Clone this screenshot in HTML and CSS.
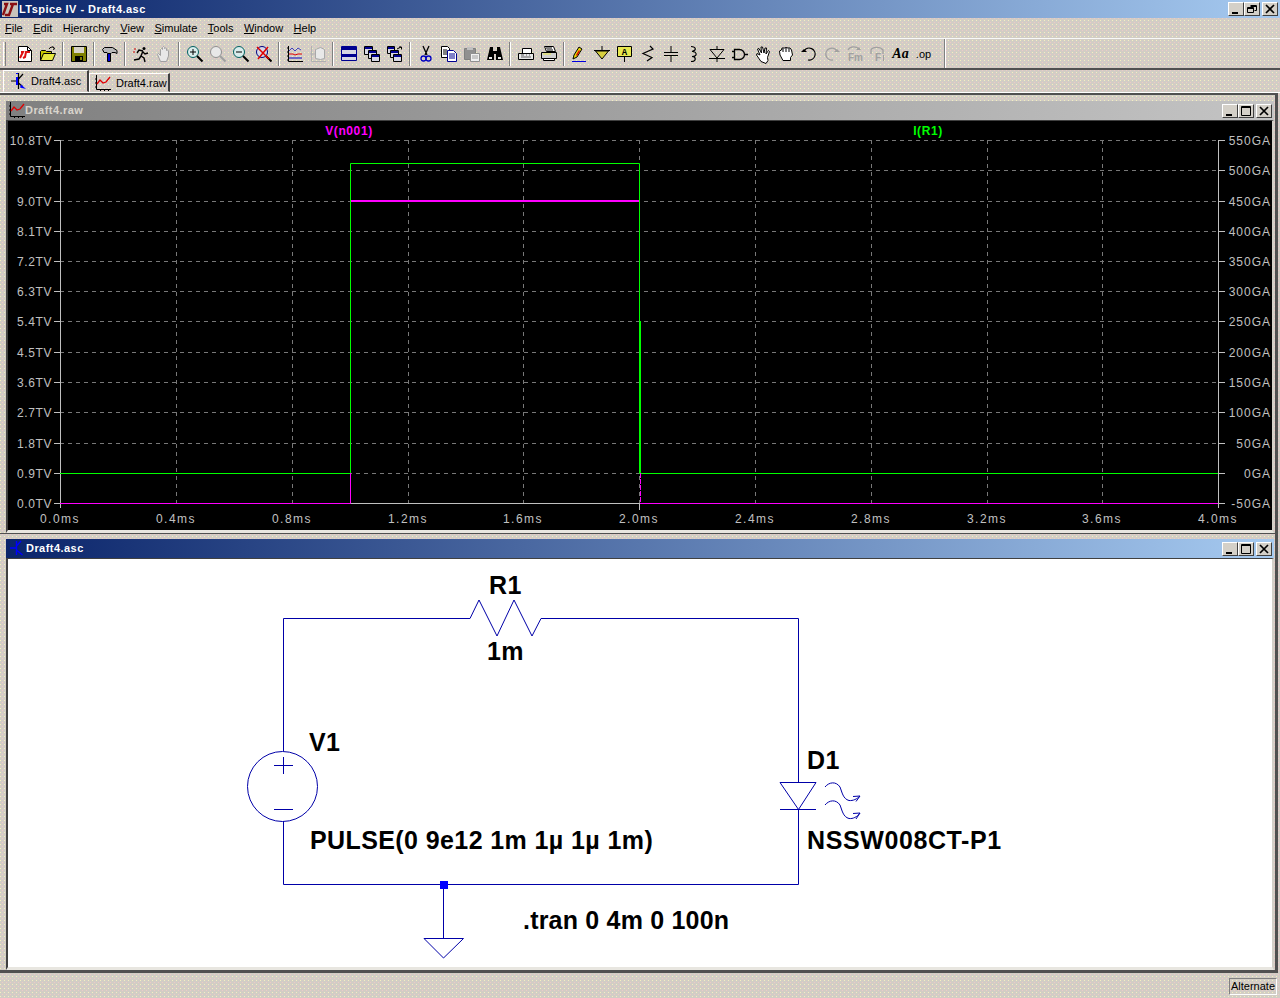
FILE: index.html
```html
<!DOCTYPE html>
<html lang="en">
<head>
<meta charset="utf-8">
<title>LTspice IV - Draft4.asc</title>
<link rel="stylesheet" href="styles.css">
</head>
<body>
<div class="app">
  <header class="titlebar active">
    <svg class="logo" viewBox="0 0 16 16"><rect width="16" height="16" fill="#c8c4bc"/><path d="M1 14 5 3H2M3 14h5M8 3h7M11 3 7 14" fill="none" stroke="#8a0f12" stroke-width="2.4"/></svg>
    <span class="title-text">LTspice IV - Draft4.asc</span>
    <span class="winbtns main">
      <span class="wbtn"><svg viewBox="0 0 12 10"><path d="M2 8h6v2H2z"/></svg></span>
      <span class="wbtn"><svg viewBox="0 0 12 10"><path d="M4.500 1.500h6v5h-2M4.500 2.500h6M1.500 3.500h6v5h-6zM1.500 4.500h6" fill="none" stroke="#000"/></svg></span>
      <span class="wbtn gap"><svg viewBox="0 0 12 10"><path d="M2 1l8 8M10 1 2 9" fill="none" stroke="#000" stroke-width="1.700"/></svg></span>
    </span>
  </header>

  <nav class="menubar">
    <span class="menu"><u>F</u>ile</span>
    <span class="menu"><u>E</u>dit</span>
    <span class="menu">H<u>i</u>erarchy</span>
    <span class="menu"><u>V</u>iew</span>
    <span class="menu"><u>S</u>imulate</span>
    <span class="menu"><u>T</u>ools</span>
    <span class="menu"><u>W</u>indow</span>
    <span class="menu"><u>H</u>elp</span>
  </nav>

  <div class="toolbar">
    <span class="grip"></span>
    <span class="tool"><svg viewBox="0 0 16 16"><path d="M1.500.500h9l4 4v11h-13z" fill="#fff" stroke="#000"/><path d="M10.500.500v4h4" fill="none" stroke="#000"/><path d="M3 12 6 6H4M6 12l2-1 1-5h4" fill="none" stroke="#e01010" stroke-width="2"/></svg></span>
    <span class="tool"><svg viewBox="0 0 16 16"><path d="M.500 14.500v-9l1-1h4l1 1h5v2" fill="#c8c800" stroke="#000"/><path d="M.500 14.500l3-7h12l-3 7z" fill="#e8e840" stroke="#000"/><path d="M9 3c1-2 3-2.500 5-1M12.500.500l2 1.500-1 2" fill="none" stroke="#000"/></svg></span>
    <span class="sep"></span>
    <span class="tool"><svg viewBox="0 0 16 16"><path d="M.500.500h15v15h-15z" fill="#808000" stroke="#000"/><path d="M3 1h10v6H3z" fill="#d8d4c8"/><path d="M4 10h8v5H4z" fill="#000"/><path d="M9 11h2v3H9z" fill="#808000"/></svg></span>
    <span class="sep"></span>
    <span class="tool"><svg viewBox="0 0 16 16"><path d="M.500 3.500l2-2h8l4.500 3v3l-2-1h-3l-1 1h-3l-1-1h-3z" fill="#b8b8b8" stroke="#000"/><path d="M5.500 7.500h3v8h-3z" fill="#0000d0" stroke="#000"/></svg></span>
    <span class="sep"></span>
    <span class="tool"><svg viewBox="0 0 16 16"><circle cx="11" cy="2.500" r="1.500"/><path d="M10 5 6 4 4 7M10 5 8 10l3 2 1 4M8 10l-2 3-5 1M10 6l2 2 3-1" fill="none" stroke="#000" stroke-width="1.400"/><path d="M1 3h2M0 6h2" stroke="#d00000"/></svg></span>
    <span class="tool off"><svg viewBox="0 0 16 16"><path d="M4.500 15.500 1.500 8.500l1-1 2 2v-6l1-1 1 1v-2l1-1 1 1v1l1-.5 1 .5v2l1-.5 1 1v5l-2 5.500z" fill="#e8e8e8" stroke="#a0a0a0"/></svg></span>
    <span class="sep"></span>
    <span class="tool"><svg viewBox="0 0 16 16"><circle cx="6" cy="6" r="5.500" fill="#d8ecec" stroke="#006060"/><path d="M3 6h6M6 3v6" stroke="#000" fill="none"/><path d="M10 10l5.500 5.500" stroke="#000" stroke-width="2"/></svg></span>
    <span class="tool off"><svg viewBox="0 0 16 16"><circle cx="6" cy="6" r="5.500" fill="#e8e8e8" stroke="#909090"/><path d="M10 10l5.500 5.500" stroke="#a0a0a0" stroke-width="2"/></svg></span>
    <span class="tool"><svg viewBox="0 0 16 16"><circle cx="6" cy="6" r="5.500" fill="#d8ecec" stroke="#006060"/><path d="M3 6h6" stroke="#000"/><path d="M10 10l5.500 5.500" stroke="#000" stroke-width="2"/></svg></span>
    <span class="tool"><svg viewBox="0 0 16 16"><circle cx="6" cy="6" r="5.500" fill="#d8d8e8" stroke="#000080"/><path d="M10 10l5.500 5.500" stroke="#000" stroke-width="2"/><path d="M1 1l12 12M12 1 2 13" stroke="#e00000" stroke-width="1.500"/></svg></span>
    <span class="sep"></span>
    <span class="tool"><svg viewBox="0 0 16 16"><path d="M1.500 0v15.500H16M0 14h1M0 10h1M0 6h1M0 2h1M5.500 16v-1M9.500 16v-1M13.500 16v-1" fill="none" stroke="#000"/><path d="M2 5l3-3 3 3 3-3 3 2" fill="none" stroke="#4040c0"/><path d="M2 8h4l2 1 3-1h4" fill="none" stroke="#e00000"/><path d="M2 12h13" stroke="#0000c0"/></svg></span>
    <span class="tool off"><svg viewBox="0 0 16 16"><path d="M1.500 0v15.500H16M0 8h15" fill="none" stroke="#b0b0b0"/><path d="M5.500 3.500l5-2 4 2v9l-4 1-5-1z" fill="#e8e8e8" stroke="#a8a8a8"/></svg></span>
    <span class="sep"></span>
    <span class="tool"><svg viewBox="0 0 16 16"><path d="M.500.500h15v14h-15z" fill="#d8d8e4" stroke="#000090"/><path d="M1 1h14v3H1zM1 8h14v3H1z" fill="#000090"/></svg></span>
    <span class="tool"><svg viewBox="0 0 16 16"><path d="M.500.500h8v8h-8z" fill="#d8d8e4" stroke="#000"/><path d="M1 1h7v2H1z" fill="#000090"/><path d="M4.500 4.500h8v8h-8z" fill="#d8d8e4" stroke="#000"/><path d="M5 5h7v2H5z" fill="#000090"/><path d="M7.500 8.500h8v7h-8z" fill="#d8d8e4" stroke="#000"/><path d="M8 9h7v2H8z" fill="#000090"/></svg></span>
    <span class="tool"><svg viewBox="0 0 16 16"><path d="M.500.500h7v7h-7z" fill="#d8d8e4" stroke="#000"/><path d="M1 1h6v2H1z" fill="#000090"/><path d="M3.500 4.500h8v7h-8z" fill="#d8d8e4" stroke="#000"/><path d="M4 5h7v2H4z" fill="#000090"/><path d="M6.500 8.500h8v7h-8z" fill="#d8d8e4" stroke="#000"/><path d="M7 9h7v2H7z" fill="#000090"/><path d="M10 3l4-2M12 1h2.500v2.500" fill="none" stroke="#000"/></svg></span>
    <span class="sep"></span>
    <span class="tool"><svg viewBox="0 0 16 16"><path d="M5 0l4 9M11 0 7 9" stroke="#000" stroke-width="1.300" fill="none"/><circle cx="5.500" cy="12.500" r="2.500" fill="none" stroke="#0000c0" stroke-width="1.300"/><circle cx="10.500" cy="12.500" r="2.500" fill="none" stroke="#0000c0" stroke-width="1.300"/></svg></span>
    <span class="tool"><svg viewBox="0 0 16 16"><path d="M.500.500h6l2 2v9h-8z" fill="#fff" stroke="#000"/><path d="M2 4h4M2 6h4M2 8h4" stroke="#000"/><path d="M6.500 4.500h6l3 3v8h-9z" fill="#fff" stroke="#000090"/><path d="M8 8h6M8 10h6M8 12h6" stroke="#000090"/></svg></span>
    <span class="tool off"><svg viewBox="0 0 16 16"><path d="M.500 2.500h11v11h-11z" fill="#909090" stroke="#808080"/><path d="M3 1h6v3H3z" fill="#c0c0c0"/><path d="M6.500 7.500h9v8h-9z" fill="#f0f0f0" stroke="#909090"/><path d="M8 10h6M8 12h6" stroke="#a0a0a0"/></svg></span>
    <span class="tool"><svg viewBox="0 0 16 16"><path d="M3 1h3v4h4V1h3l3 13H9V8H7v6H0z" fill="#000"/><path d="M2 11h3v2H2zM11 11h3v2h-3z" fill="#e8e8e8"/></svg></span>
    <span class="sep"></span>
    <span class="tool"><svg viewBox="0 0 16 16"><path d="M4.500 2.500h9v5h-9z" fill="#fff" stroke="#000"/><path d="M.500 7.500h15v6h-15z" fill="#e8e8e8" stroke="#000"/><path d="M3 9h3M8 9h1M11 9h1M3 11h10" stroke="#606060"/></svg></span>
    <span class="tool"><svg viewBox="0 0 16 16"><path d="M3.500.500h9l2 5h-9z" fill="#fff" stroke="#000"/><path d="M5 2h6M6 4h6" stroke="#000"/><path d="M.500 6.500h15v6h-15z" fill="#d0d0d0" stroke="#000"/><path d="M2 8h8" stroke="#e8e840"/><path d="M2.500 12.500h11v2h-11z" fill="#fff" stroke="#000"/></svg></span>
    <span class="sep last"></span>
    <span class="tool"><svg viewBox="0 0 16 16"><path d="M1 15.500h14" stroke="#0000e0"/><path d="M2 13l1-4 5-8 3 2-5 8z" fill="#e8d800" stroke="#000"/><path d="M5 9l3-5 1 1-3 5z" fill="#e00000"/></svg></span>
    <span class="tool"><svg viewBox="0 0 16 16"><path d="M8 0v4M0 4.500h16" stroke="#000" fill="none"/><path d="M1.500 5l6.500 8 6.500-8z" fill="#d8d040" stroke="#000"/></svg></span>
    <span class="tool"><svg viewBox="0 0 16 16"><path d="M.500.500h14v10h-14z" fill="#e8e850" stroke="#000"/><path d="M7.500 10v6" stroke="#000"/><text class="ico-a" x="7.500" y="9" text-anchor="middle">A</text></svg></span>
    <span class="tool"><svg viewBox="0 0 16 16"><path d="M10 0 13 3 3 7.500 12 11.500 7 15" fill="none" stroke="#000" stroke-width="1.200"/></svg></span>
    <span class="tool"><svg viewBox="0 0 16 16"><path d="M8 0v6M8 10v6M1 6.500h14M1 9.500h14" fill="none" stroke="#000"/></svg></span>
    <span class="tool"><svg viewBox="0 0 16 16"><path d="M5 .500c5 0 6 4 1 5 5 0 6 5 0 5 4 0 5 5-1 5" fill="none" stroke="#000" stroke-width="1.200"/></svg></span>
    <span class="tool"><svg viewBox="0 0 16 16"><path d="M8 0v3M8 12v4M0 12.500h16M1 3.500h14L8 12z" fill="none" stroke="#000"/></svg></span>
    <span class="tool"><svg viewBox="0 0 16 16"><path d="M2.500 3.500h5a5 5 0 0 1 0 10h-5zM0 5.500h2.500M0 11.500h2.500M12.500 8.500H16" fill="none" stroke="#000" stroke-width="1.300"/></svg></span>
    <span class="tool"><svg viewBox="0 0 16 16"><path d="M6 15.500 1.500 9 2 7.500 5 9 2.500 3 4 2.500 6.500 7l-.5-6h1.500l1.500 6 1-5h1.500l-.5 6 2.500-3.500 1 1-2 6 .5 3-2 3z" fill="#fff" stroke="#000"/></svg></span>
    <span class="tool"><svg viewBox="0 0 16 16"><path d="M5 14.500 2 9 1.500 5l2-1 .5-2h2.500L8 1.500l2 .5h2l1.500 2 1 5-2 2.500v3z" fill="#fff" stroke="#000"/><path d="M5 2.500V6M8 2v4M11 2.500V6" stroke="#000"/></svg></span>
    <span class="tool"><svg viewBox="0 0 16 16"><path d="M3 5a6 6 0 1 1 4 9" fill="none" stroke="#000" stroke-width="1.200"/><path d="M0 6h6L3 3z" fill="#000"/></svg></span>
    <span class="tool off"><svg viewBox="0 0 16 16"><path d="M13 5a6 6 0 1 0-4 9" fill="none" stroke="#a0a0a0" stroke-width="1.400"/><path d="M16 6h-6l3-3z" fill="#a0a0a0"/></svg></span>
    <span class="tool off"><svg viewBox="0 0 16 16"><path d="M1 4C3 0 9 0 12 3" fill="none" stroke="#a0a0a0" stroke-width="1.300"/><path d="M14 4h-5l3-3z" fill="#a0a0a0"/><text class="ico-fm" x="1" y="15">Fm</text></svg></span>
    <span class="tool off"><svg viewBox="0 0 16 16"><path d="M1 8V4C2 1 10 0 13 4v4" fill="none" stroke="#a0a0a0" stroke-width="1.300"/><text class="ico-fm" x="5" y="15">F</text><path d="M13.500 9v6" stroke="#a0a0a0"/></svg></span>
    <span class="tool"><span class="ico-aa">Aa</span></span>
    <span class="tool"><span class="ico-op">.op</span></span>
    <span class="tool-end"></span>
  </div>

  <div class="tabs">
    <span class="tab current">
      <svg class="mini" viewBox="0 0 16 16"><path d="M7.500 0v16M0 8h7M7.500 6 12 1M7.500 10l4 3.500" fill="none" stroke="#000" stroke-width="1.200"/><path d="M10 11.500 15 16l-6-1.500z" fill="#0000ff"/><path d="M5 0h2M6 4v8" stroke="#0000ff" stroke-width="2"/></svg>
      Draft4.asc
    </span>
    <span class="tab">
      <svg class="mini" viewBox="0 0 16 16"><path d="M1.500 0v14.500H16M0 4h1M0 8h1M0 12h1M5.500 16v-1M9.500 16v-1M13.500 16v-1" fill="none" stroke="#000"/><path d="M2 9l3-4 3 3 3-1 4-5" fill="none" stroke="#e00000" stroke-width="1.300"/></svg>
      Draft4.raw
    </span>
  </div>

  <main class="mdi">
    <section class="child first">
      <div class="titlebar sub idle">
        <svg class="mini plotico" viewBox="0 0 16 16"><path d="M1.500 0v14.500H16M0 4h1M0 8h1M0 12h1M5.500 16v-1M9.500 16v-1M13.500 16v-1" fill="none" stroke="#000"/><path d="M2 9l3-4 3 3 3-1 4-5" fill="none" stroke="#e00000" stroke-width="1.300"/></svg>
        <span class="title-text">Draft4.raw</span>
        <span class="winbtns">
          <span class="wbtn"><svg viewBox="0 0 12 10"><path d="M2 8h6v2H2z"/></svg></span>
          <span class="wbtn"><svg viewBox="0 0 12 10"><path d="M1.500 .5h9v9h-9zM1.500 1.500h9" fill="none" stroke="#000"/></svg></span>
          <span class="wbtn gap"><svg viewBox="0 0 12 10"><path d="M2 1l8 8M10 1 2 9" fill="none" stroke="#000" stroke-width="1.700"/></svg></span>
        </span>
      </div>
      <div class="pane plotpane">
        <svg class="plot" viewBox="8 121 1264 409" width="1264" height="409">
          <path class="grid" d="M176.500 140V503M292.500 140V503M408.500 140V503M523.500 140V503M639.500 140V503M755.500 140V503M871.500 140V503M987.500 140V503M1102.500 140V503M60 140.500H1218M60 170.500H1218M60 201.500H1218M60 231.500H1218M60 261.500H1218M60 291.500H1218M60 321.500H1218M60 352.500H1218M60 382.500H1218M60 412.500H1218M60 443.500H1218M60 473.500H1218"/>
          <path class="axis" d="M60.500 140V508M1218.500 140V508M60 503.500H1218M639.500 503V510M54 140.500h6M54 170.500h6M54 201.500h6M54 231.500h6M54 261.500h6M54 291.500h6M54 321.500h6M54 352.500h6M54 382.500h6M54 412.500h6M54 443.500h6M54 473.500h6M54 503.500h6M1218 140.500h7M1218 170.500h7M1218 201.500h7M1218 231.500h7M1218 261.500h7M1218 291.500h7M1218 321.500h7M1218 352.500h7M1218 382.500h7M1218 412.500h7M1218 443.500h7M1218 473.500h7M1218 503.500h7"/>
          <path class="green" d="M60 473.500H350.500V163.500H639.500V473.500H1218"/>
          <path class="green" d="M640.500 321V473"/>
          <path class="magenta" d="M60 503.500H350.500V473"/>
          <path class="magenta thick" d="M351 201H639"/>
          <path class="magenta dash" d="M640.500 473V503"/>
          <path class="magenta" d="M640 503.500H1218"/>
          <g class="lab end">
            <text x="52" y="145">10.8TV</text><text x="52" y="175">9.9TV</text><text x="52" y="206">9.0TV</text><text x="52" y="236">8.1TV</text><text x="52" y="266">7.2TV</text><text x="52" y="296">6.3TV</text><text x="52" y="326">5.4TV</text><text x="52" y="357">4.5TV</text><text x="52" y="387">3.6TV</text><text x="52" y="417">2.7TV</text><text x="52" y="448">1.8TV</text><text x="52" y="478">0.9TV</text><text x="52" y="508">0.0TV</text>
          </g>
          <g class="lab end right">
            <text x="1271" y="145">550GA</text><text x="1271" y="175">500GA</text><text x="1271" y="206">450GA</text><text x="1271" y="236">400GA</text><text x="1271" y="266">350GA</text><text x="1271" y="296">300GA</text><text x="1271" y="326">250GA</text><text x="1271" y="357">200GA</text><text x="1271" y="387">150GA</text><text x="1271" y="417">100GA</text><text x="1271" y="448">50GA</text><text x="1271" y="478">0GA</text><text x="1271" y="508">-50GA</text>
          </g>
          <g class="lab mid">
            <text x="60" y="523">0.0ms</text><text x="176" y="523">0.4ms</text><text x="292" y="523">0.8ms</text><text x="408" y="523">1.2ms</text><text x="523" y="523">1.6ms</text><text x="639" y="523">2.0ms</text><text x="755" y="523">2.4ms</text><text x="871" y="523">2.8ms</text><text x="987" y="523">3.2ms</text><text x="1102" y="523">3.6ms</text><text x="1218" y="523">4.0ms</text>
          </g>
          <text class="lab trace-m" x="349" y="135">V(n001)</text>
          <text class="lab trace-g" x="928" y="135">I(R1)</text>
        </svg>
      </div>
    </section>

    <section class="child second">
      <div class="titlebar sub active">
        <svg class="mini plotico" viewBox="0 0 16 16"><path d="M7.500 1v14M1 8h6M7.500 6 12 1M7.500 10l6 5" fill="none" stroke="#0000ff" stroke-width="1.400"/></svg>
        <span class="title-text">Draft4.asc</span>
        <span class="winbtns">
          <span class="wbtn"><svg viewBox="0 0 12 10"><path d="M2 8h6v2H2z"/></svg></span>
          <span class="wbtn"><svg viewBox="0 0 12 10"><path d="M1.500 .5h9v9h-9zM1.500 1.500h9" fill="none" stroke="#000"/></svg></span>
          <span class="wbtn gap"><svg viewBox="0 0 12 10"><path d="M2 1l8 8M10 1 2 9" fill="none" stroke="#000" stroke-width="1.700"/></svg></span>
        </span>
      </div>
      <div class="pane schpane">
        <svg class="sch" viewBox="8 559 1264 408" width="1264" height="408">
          <path class="wire" d="M283.500 751V618.500H470L479 600 497 636 514 600 532 636 541 618.500H798.500V782M798.500 809V884.500H283.500V821"/>
          <circle class="wire" cx="282.500" cy="786.500" r="35"/>
          <path class="wire" d="M274 765.500H293M283.500 757V774M274 809.500H293"/>
          <path class="wire" d="M780 782.500H816L798.500 809.500ZM780 809.500H816"/>
          <path class="wire" d="M825 787C829 782 836 781 840 787 842 792 843 799 849 800.500 853 801 857 799 860 796M853 796.500 860 796 856 801.500"/>
          <path class="wire" d="M825 805C829 800 836 799 840 805 842 810 843 817 849 818.500 853 819 857 817 860 813M853 813.500 860 813 856 819"/>
          <path class="wire" d="M443.500 884V938.500M424 938.500H463.500L443.500 958Z"/>
          <rect class="node" x="440" y="881" width="8" height="8"/>
          <g class="schtext">
            <text x="489" y="594">R1</text>
            <text x="487" y="660">1m</text>
            <text x="309" y="751">V1</text>
            <text x="807" y="769">D1</text>
            <text x="310" y="849">PULSE(0 9e12 1m 1µ 1µ 1m)</text>
            <text class="loose" x="807" y="849">NSSW008CT-P1</text>
            <text class="tight" x="523" y="929">.tran 0 4m 0 100n</text>
          </g>
        </svg>
      </div>
    </section>
  </main>

  <footer class="statusbar"><span class="status-cell">Alternate</span></footer>
</div>
</body>
</html>
```

FILE: styles.css
```css
* { box-sizing: border-box; }

html, body { margin: 0; padding: 0; }

body {
  width: 1280px;
  height: 998px;
  overflow: hidden;
  font-family: "Liberation Sans", Arial, sans-serif;
  font-size: 11px;
  color: #000;
}

.app {
  display: flex;
  flex-direction: column;
  width: 1280px;
  height: 998px;
  background-color: #d2cdc5;
  background-image:
    conic-gradient(at 1px 1px, transparent 75%, #f4f0c0 0),
    conic-gradient(at 1px 1px, transparent 75%, #eec8c8 0);
  background-size: 4px 4px, 4px 4px;
  background-position: 0 0, 2px 2px;
}

.titlebar {
  display: flex;
  align-items: center;
  flex: none;
  height: 18px;
  color: #fff;
  font-weight: bold;
}

.titlebar.active { background: linear-gradient(90deg, #0a246a, #a6caf0); }
.titlebar.idle { background: linear-gradient(90deg, #808080, #c4c4c4); color: #d8d4cc; }

.title-text { letter-spacing: .45px; }

.logo { width: 16px; height: 16px; margin: 0 1px 0 2px; flex: none; }

.winbtns { display: flex; margin-left: auto; margin-right: 2px; }

.wbtn {
  display: flex;
  align-items: center;
  justify-content: center;
  width: 16px;
  height: 14px;
  background: #d4d0c8;
  border: 1px solid;
  border-color: #fff #404040 #404040 #fff;
}

.wbtn svg { width: 12px; height: 10px; }
.wbtn.gap { margin-left: 2px; }

.menubar {
  display: flex;
  align-items: center;
  flex: none;
  height: 20px;
  padding: 0 0 0 5px;
  gap: 10.500px;
}

.menu u { text-decoration: underline; }

.toolbar {
  display: flex;
  align-items: center;
  flex: none;
  height: 32px;
  padding: 0 0 0 3px;
  border-top: 1px solid #f8f8f8;
  border-bottom: 2px solid #505050;
}

.grip {
  width: 3px;
  height: 24px;
  margin-right: 7px;
  border-left: 1px solid #fff;
  border-right: 1px solid #808080;
}

.sep {
  width: 2px;
  height: 24px;
  margin: 0 3px;
  border-left: 1px solid #808080;
  border-right: 1px solid #fff;
}

.sep.last { margin-right: 2px; }

.tool {
  display: flex;
  align-items: center;
  justify-content: center;
  width: 23px;
  height: 24px;
  flex: none;
}

.tool svg { width: 16px; height: 16px; overflow: visible; }

.tool-end {
  align-self: stretch;
  width: 2px;
  margin-left: 9px;
  border-left: 1px solid #808080;
  border-right: 1px solid #fff;
}

.ico-a { font: bold 9px "Liberation Mono", monospace; fill: #000; }
.ico-fm { font: bold 10px "Liberation Sans", sans-serif; fill: #a0a0a0; }
.ico-aa { font: italic bold 14px "Liberation Serif", serif; }
.ico-op { font: 11px "Liberation Sans", sans-serif; }

.tabs {
  display: flex;
  align-items: flex-end;
  flex: none;
  height: 23px;
  padding-left: 3px;
  border-bottom: 1px solid #fff;
}

.tab {
  display: flex;
  align-items: center;
  gap: 5px;
  height: 19px;
  padding: 0 3px 0 5px;
  font-size: 11px;
  white-space: nowrap;
  border: 1px solid;
  border-color: #fff #404040 transparent #fff;
  border-right-width: 2px;
}

.tab.current { height: 22px; width: 86px; padding-left: 7px; }
.tab.current .mini { margin-right: -1px; }
.tab:not(.current) { width: 81px; }

.mini { width: 16px; height: 16px; flex: none; }

.mdi {
  display: flex;
  flex-direction: column;
  flex: none;
  height: 880px;
  margin-right: 2px;
  border-top: 2px solid #505050;
  border-right: 3px solid #505050;
  border-bottom: 3px solid #505050;
}

.child { padding-left: 6px; padding-right: 1px; flex: none; }
.child.first { height: 439px; padding-top: 6px; border-bottom: 1px solid #505050; }
.child.second { height: 436px; padding-top: 5px; }

.sub { height: 19px; padding-left: 3px; padding-bottom: 2px; }
.sub .wbtn { position: relative; top: 1px; }
.second .title-text { margin-left: 1px; }

.pane {
  display: flex;
  border-left: 2px solid #404040;
  border-top: 1px solid #404040;
  border-right: 2px solid #d4d0c8;
  border-bottom: 3px solid #e8e6e0;
}

.plotpane { height: 413px; background: #000; }
.schpane { height: 412px; background: #fff; }

.plot, .sch { display: block; flex: none; }

.grid { fill: none; stroke: #787878; stroke-dasharray: 4 4; }
.axis { fill: none; stroke: #c0c0c0; }
.green { fill: none; stroke: #00ff00; }
.magenta { fill: none; stroke: #ff00ff; }
.magenta.thick { stroke-width: 2; }
.magenta.dash { stroke-dasharray: 5 1; }

.lab { font: 12px "Liberation Sans", sans-serif; letter-spacing: .6px; fill: #c0c0c0; }
.lab.end { text-anchor: end; }
.lab.right { letter-spacing: 1px; }
.lab.mid { text-anchor: middle; letter-spacing: 1.500px; }
.trace-m { fill: #ff00ff; text-anchor: middle; font-weight: bold; }
.trace-g { fill: #00ff00; text-anchor: middle; font-weight: bold; }

.wire { fill: none; stroke: #0000a8; }
.node { fill: #0000ff; }
.schtext { font: bold 25px "Liberation Sans", sans-serif; letter-spacing: .4px; fill: #000; }
.schtext .loose { letter-spacing: .6px; }
.schtext .tight { letter-spacing: .2px; }

.statusbar {
  display: flex;
  justify-content: flex-end;
  align-items: center;
  flex: 1;
  padding-right: 3px;
  padding-top: 1px;
}

.status-cell {
  width: 48px;
  height: 17px;
  padding-left: 1px;
  line-height: 15px;
  white-space: nowrap;
  overflow: hidden;
  border: 1px solid;
  border-color: #808080 #fff #fff #808080;
}
```
